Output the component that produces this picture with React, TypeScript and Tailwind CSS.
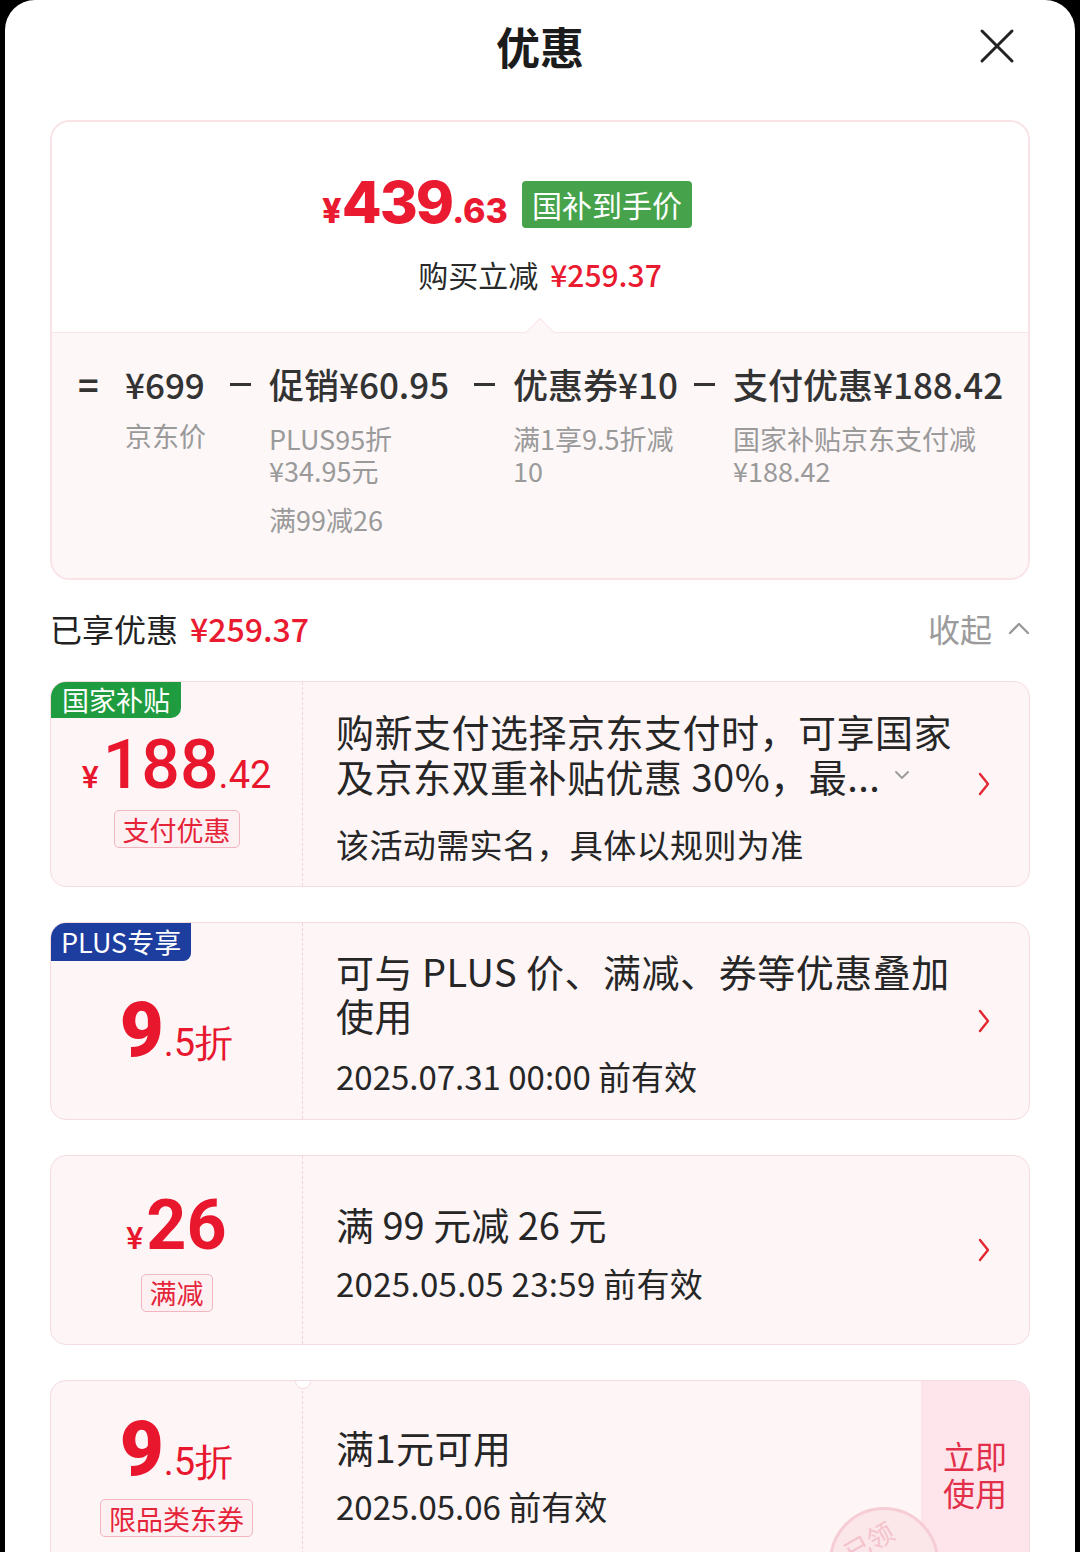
import React from 'react';

const ChevronRight = () => (
  <svg width="14" height="26" viewBox="0 0 14 26" className="shrink-0">
    <path d="M3 3l8 10-8 10" stroke="#e3262f" strokeWidth="2.4" fill="none" strokeLinecap="round" strokeLinejoin="round" />
  </svg>
);

const Minus = () => (
  <div className="w-[39px] h-[46px] flex items-center">
    <div className="w-[21px] h-[3px] bg-[#333]" />
  </div>
);

const Tag = ({ children }: { children: React.ReactNode }) => (
  <div className="h-[38px] px-[8px] flex items-center rounded-[5px] border border-[#f1b6bf] bg-[#fdf0f2] text-[27px] leading-none text-[#e5243a]">
    {children}
  </div>
);

const Coupon = ({
  height,
  badge,
  left,
  right,
  extra,
  action,
}: {
  height: string;
  badge?: React.ReactNode;
  left: React.ReactNode;
  right: React.ReactNode;
  extra?: React.ReactNode;
  action?: React.ReactNode;
}) => (
  <div className={`relative flex ${height} rounded-[16px] border border-[#f5dce1] bg-[#fdf5f6] overflow-hidden shrink-0`}>
    {badge}
    <div className="w-[252px] shrink-0 flex flex-col items-center justify-center border-r border-dashed border-[#f1d3d8]">
      {left}
    </div>
    <div className="flex-1 min-w-0 flex items-center pl-[33px]">
      <div className="flex-1 min-w-0 whitespace-nowrap">{right}</div>
      {action ?? (
        <div className="pr-[38px]">
          <ChevronRight />
        </div>
      )}
    </div>
    {extra}
  </div>
);

export default function App() {
  return (
    <div className="w-[1080px] h-[1552px] bg-black overflow-hidden font-['Noto_Sans_CJK_SC','Noto_Sans',sans-serif]">
      <div className="mx-[5px] h-full bg-white rounded-t-[30px] px-[45px]">
        {/* header */}
        <div className="relative h-[92px] flex items-center justify-center">
          <span className="text-[44px] font-bold text-[#1c1c1c]">优惠</span>
          <svg className="absolute right-[15px] top-[28px]" width="36" height="36" viewBox="0 0 36 36">
            <path d="M3 3l30 30M33 3L3 33" stroke="#222" strokeWidth="3" strokeLinecap="round" />
          </svg>
        </div>

        {/* summary card */}
        <div className="mt-[28px] rounded-[20px] border-2 border-[#fae3e7] overflow-hidden">
          <div className="h-[210px] bg-white flex flex-col items-center pt-[52px]">
            <div className="flex items-center h-[60px] mr-[66px]">
              <div className="flex items-baseline text-[#ea1a30] font-['Inter',sans-serif] font-extrabold">
                <span className="text-[34px]">¥</span>
                <span className="text-[58px] leading-[60px] tracking-[-2px]">439</span>
                <span className="text-[34px]">.63</span>
              </div>
              <div className="ml-[14px] h-[47px] px-[10px] flex items-center rounded-[4px] bg-[#46a34b] text-white text-[30px]">
                国补到手价
              </div>
            </div>
            <div className="mt-[20px] h-[40px] flex items-center text-[30px]">
              <span className="text-[#2a2a2a]">购买立减</span>
              <span className="ml-[12px] text-[#ea1a30] font-medium">¥259.37</span>
            </div>
          </div>
          <div className="relative h-[246px] bg-[#fdf7f8] border-t border-[#f8e6e9]">
            <div className="absolute -top-[11px] left-1/2 -ml-[10px] w-[20px] h-[20px] rotate-45 bg-[#fdf7f8] border-l border-t border-[#f8e6e9]" />
            <div className="flex pt-[28px] pl-[18px] text-[#333] text-[35px] font-medium leading-[46px] whitespace-nowrap">
              <div className="w-[55px] pl-[8px] font-bold">=</div>
              <div className="w-[105px]">
                <div>¥699</div>
                <div className="mt-[13px] text-[27px] leading-[32px] font-normal text-[#9a9a9a]">京东价</div>
              </div>
              <Minus />
              <div className="w-[205px]">
                <div>促销¥60.95</div>
                <div className="mt-[16px] text-[27px] leading-[32px] font-normal text-[#9a9a9a]">
                  <div>PLUS95折</div>
                  <div>¥34.95元</div>
                  <div className="mt-[17px]">满99减26</div>
                </div>
              </div>
              <Minus />
              <div className="w-[181px]">
                <div>优惠券¥10</div>
                <div className="mt-[16px] text-[27px] leading-[32px] font-normal text-[#9a9a9a]">
                  <div>满1享9.5折减</div>
                  <div>10</div>
                </div>
              </div>
              <Minus />
              <div className="flex-1">
                <div>支付优惠¥188.42</div>
                <div className="mt-[16px] text-[27px] leading-[32px] font-normal text-[#9a9a9a]">
                  <div>国家补贴京东支付减</div>
                  <div>¥188.42</div>
                </div>
              </div>
            </div>
          </div>
        </div>

        {/* enjoyed row */}
        <div className="mt-[20px] h-[56px] flex items-center justify-between text-[32px]">
          <div className="flex items-center">
            <span className="text-[#222]">已享优惠</span>
            <span className="ml-[12px] text-[#ea1a30] font-medium">¥259.37</span>
          </div>
          <div className="flex items-center text-[#9b9b9b]">
            <span>收起</span>
            <svg className="ml-[16px]" width="22" height="14" viewBox="0 0 22 14">
              <path d="M2 12l9-9 9 9" stroke="#999" strokeWidth="2.4" fill="none" strokeLinecap="round" strokeLinejoin="round" />
            </svg>
          </div>
        </div>

        {/* coupons */}
        <div className="mt-[25px] flex flex-col gap-[35px]">
          <Coupon
            height="h-[206px]"
            badge={
              <div className="absolute top-0 left-0 h-[36px] px-[11px] flex items-center bg-[#1f9c3f] text-white text-[27px] rounded-br-[10px]">
                国家补贴
              </div>
            }
            left={
              <>
                <div className="mt-[10px] flex items-baseline text-[#e8172e] font-['Roboto',sans-serif]">
                  <span className="text-[32px] font-medium mr-[4px]">¥</span>
                  <span className="text-[68px] leading-[70px] font-medium">188</span>
                  <span className="text-[38px]">.42</span>
                </div>
                <div className="mt-[6px]">
                  <Tag>支付优惠</Tag>
                </div>
              </>
            }
            right={
              <div className="text-[#262626] pt-[6px]">
                <div className="text-[38px] tracking-[0.5px] leading-[45px]">购新支付选择京东支付时，可享国家</div>
                <div className="text-[38px] tracking-[0.5px] leading-[45px] flex items-center">
                  <span>及京东双重补贴优惠 30%，最...</span>
                  <svg className="ml-[14px]" width="16" height="10" viewBox="0 0 16 10">
                    <path d="M2 2l6 6 6-6" stroke="#999" strokeWidth="1.8" fill="none" strokeLinecap="round" />
                  </svg>
                </div>
                <div className="mt-[24px] text-[33px] leading-[45px] tracking-[0.4px]">该活动需实名，具体以规则为准</div>
              </div>
            }
          />

          <Coupon
            height="h-[198px]"
            badge={
              <div className="absolute top-0 left-0 h-[38px] px-[10px] flex items-center bg-[#1d3d9f] text-white text-[27px] rounded-br-[8px]">
                PLUS专享
              </div>
            }
            left={
              <div className="mt-[22px] flex items-baseline text-[#e8172e] font-['Roboto',sans-serif]">
                <span className="text-[76px] leading-[76px] font-black">9</span>
                <span className="text-[38px]">.5折</span>
              </div>
            }
            right={
              <div className="text-[#262626] pt-[6px]">
                <div className="text-[38px] tracking-[0.5px] leading-[44px]">可与 PLUS 价、满减、券等优惠叠加</div>
                <div className="text-[38px] tracking-[0.5px] leading-[44px]">使用</div>
                <div className="mt-[17px] text-[33px] leading-[45px]">2025.07.31 00:00 前有效</div>
              </div>
            }
          />

          <Coupon
            height="h-[190px]"
            left={
              <>
                <div className="flex items-baseline text-[#e8172e] font-['Roboto',sans-serif]">
                  <span className="text-[32px] font-medium mr-[3px]">¥</span>
                  <span className="text-[70px] leading-[72px] font-bold">26</span>
                </div>
                <div className="mt-[12px]">
                  <Tag>满减</Tag>
                </div>
              </>
            }
            right={
              <div className="text-[#262626] pt-[6px]">
                <div className="text-[38px] leading-[45px]">满 99 元减 26 元</div>
                <div className="mt-[15px] text-[33px] leading-[45px] tracking-[0.3px]">2025.05.05 23:59 前有效</div>
              </div>
            }
          />

          <Coupon
            height="h-[200px]"
            left={
              <div className="-mt-[12px] flex flex-col items-center">
                <div className="flex items-baseline text-[#e8172e] font-['Roboto',sans-serif]">
                  <span className="text-[76px] leading-[76px] font-black">9</span>
                  <span className="text-[38px]">.5折</span>
                </div>
                <div className="mt-[8px]">
                  <Tag>限品类东券</Tag>
                </div>
              </div>
            }
            right={
              <div className="text-[#262626] -mt-[8px]">
                <div className="text-[38px] tracking-[0.5px] leading-[45px]">满1元可用</div>
                <div className="mt-[15px] text-[33px] leading-[45px]">2025.05.06 前有效</div>
              </div>
            }
            action={
              <div className="w-[108px] self-stretch bg-[#fde5eb] flex items-center justify-center">
                <div className="-mt-[12px] text-[32px] leading-[37px] text-[#e3304a] text-center">
                  <div>立即</div>
                  <div>使用</div>
                </div>
              </div>
            }
            extra={
              <>
                <div className="absolute -top-[8px] left-[244px] w-[16px] h-[16px] rounded-full bg-white border border-[#f5dce1]" />
                <div className="absolute left-[778px] top-[126px] w-[110px] h-[110px] rounded-full border-[3px] border-[#f6cdd5] bg-[#fbe6ea] flex justify-center pt-[12px]">
                  <span className="-rotate-[30deg] text-[26px] leading-[30px] text-[#f4c2cb]">已领</span>
                </div>
              </>
            }
          />
        </div>
      </div>
    </div>
  );
}
